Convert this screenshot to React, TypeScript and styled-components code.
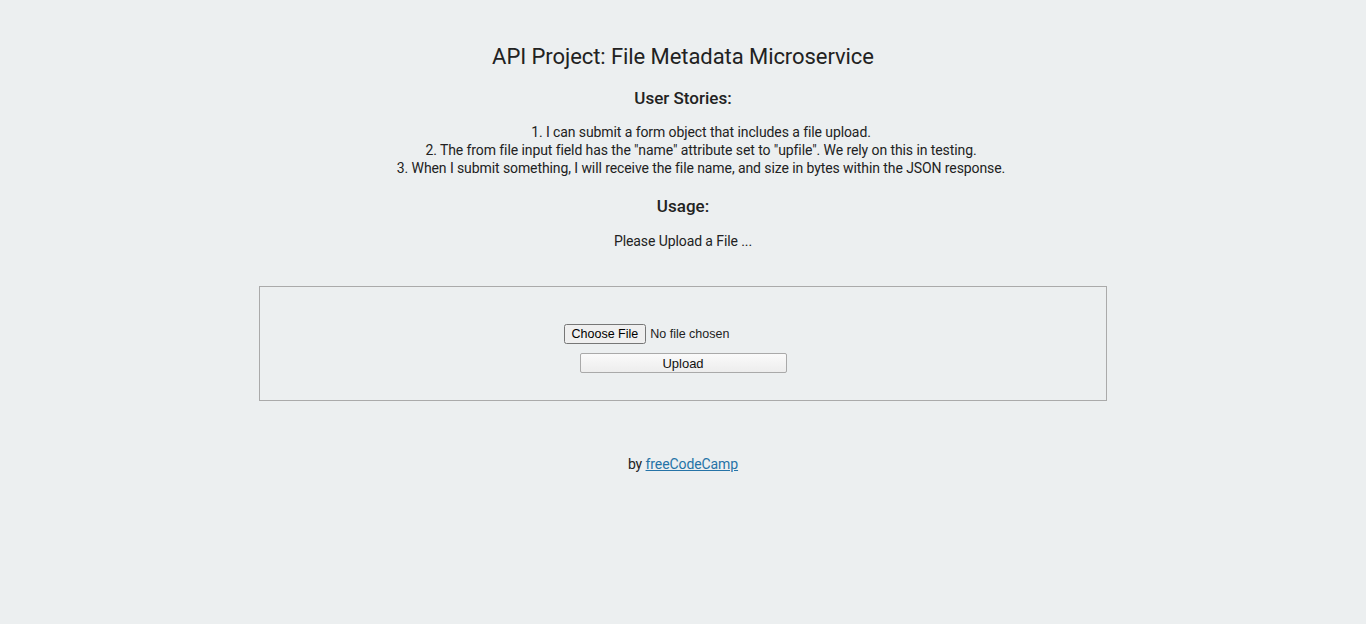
import React from "react";
import styled, { createGlobalStyle } from "styled-components";

const Global = createGlobalStyle`
  html, body { margin: 0; padding: 0; }
  body {
    background: #eceff0;
    color: #222;
    font-family: Roboto, "Liberation Sans", sans-serif;
    text-align: center;
  }
`;

const Page = styled.div`
  display: flex;
  flex-direction: column;
  align-items: center;
  padding-top: 43px;
`;

const Title = styled.h2`
  margin: 0;
  font-size: 22px;
  font-weight: 400;
  line-height: 28px;
  letter-spacing: -0.07px;
`;

const SubTitle = styled.h3<{ $top: number }>`
  margin: ${(p) => p.$top}px 0 0;
  font-size: 17px;
  font-weight: 500;
  line-height: 22px;
`;

const Text = styled.p<{ $top: number; $indent?: number }>`
  margin: ${(p) => p.$top}px 0 0;
  padding-left: ${(p) => p.$indent ?? 0}px;
  font-size: 14px;
  font-weight: 400;
  line-height: 18px;
  letter-spacing: -0.09px;
`;

const Panel = styled.form`
  margin-top: 36px;
  width: 848px;
  height: 115px;
  border: 1px solid #aaa;
  display: flex;
  flex-direction: column;
  align-items: center;
  padding-top: 37px;
  box-sizing: border-box;
  gap: 9px;
`;

const FileInput = styled.input`
  font-family: "Liberation Sans", Arial, sans-serif;
  font-size: 12.5px;
  color: #222;
  margin-left: -2px;
`;

const UploadButton = styled.input`
  width: 207px;
  height: 20px;
  font-family: "Liberation Sans", Arial, sans-serif;
  font-size: 13px;
  padding: 0;
  color: #111;
  background: linear-gradient(#fafafa, #ededed);
  border: 1px solid #a9a9a9;
  border-radius: 2px;
`;

const Footer = styled.p`
  margin: 54px 0 0;
  font-size: 14px;
  font-weight: 400;
  line-height: 18px;
  letter-spacing: -0.09px;
`;

const Link = styled.a`
  color: #2573a7;
  text-decoration: underline;
`;

export default function App() {
  return (
    <>
      <Global />
      <Page>
        <Title>API Project: File Metadata Microservice</Title>
        <SubTitle $top={16}>User Stories:</SubTitle>
        <Text $top={14} $indent={36}>
          1. I can submit a form object that includes a file upload.
          <br />
          2. The from file input field has the "name" attribute set to "upfile". We rely on this in testing.
          <br />
          3. When I submit something, I will receive the file name, and size in bytes within the JSON response.
        </Text>
        <SubTitle $top={18}>Usage:</SubTitle>
        <Text $top={15}>Please Upload a File ...</Text>
        <Panel onSubmit={(e) => e.preventDefault()}>
          <FileInput type="file" name="upfile" />
          <UploadButton type="submit" value="Upload" />
        </Panel>
        <Footer>
          by <Link href="#">freeCodeCamp</Link>
        </Footer>
      </Page>
    </>
  );
}
